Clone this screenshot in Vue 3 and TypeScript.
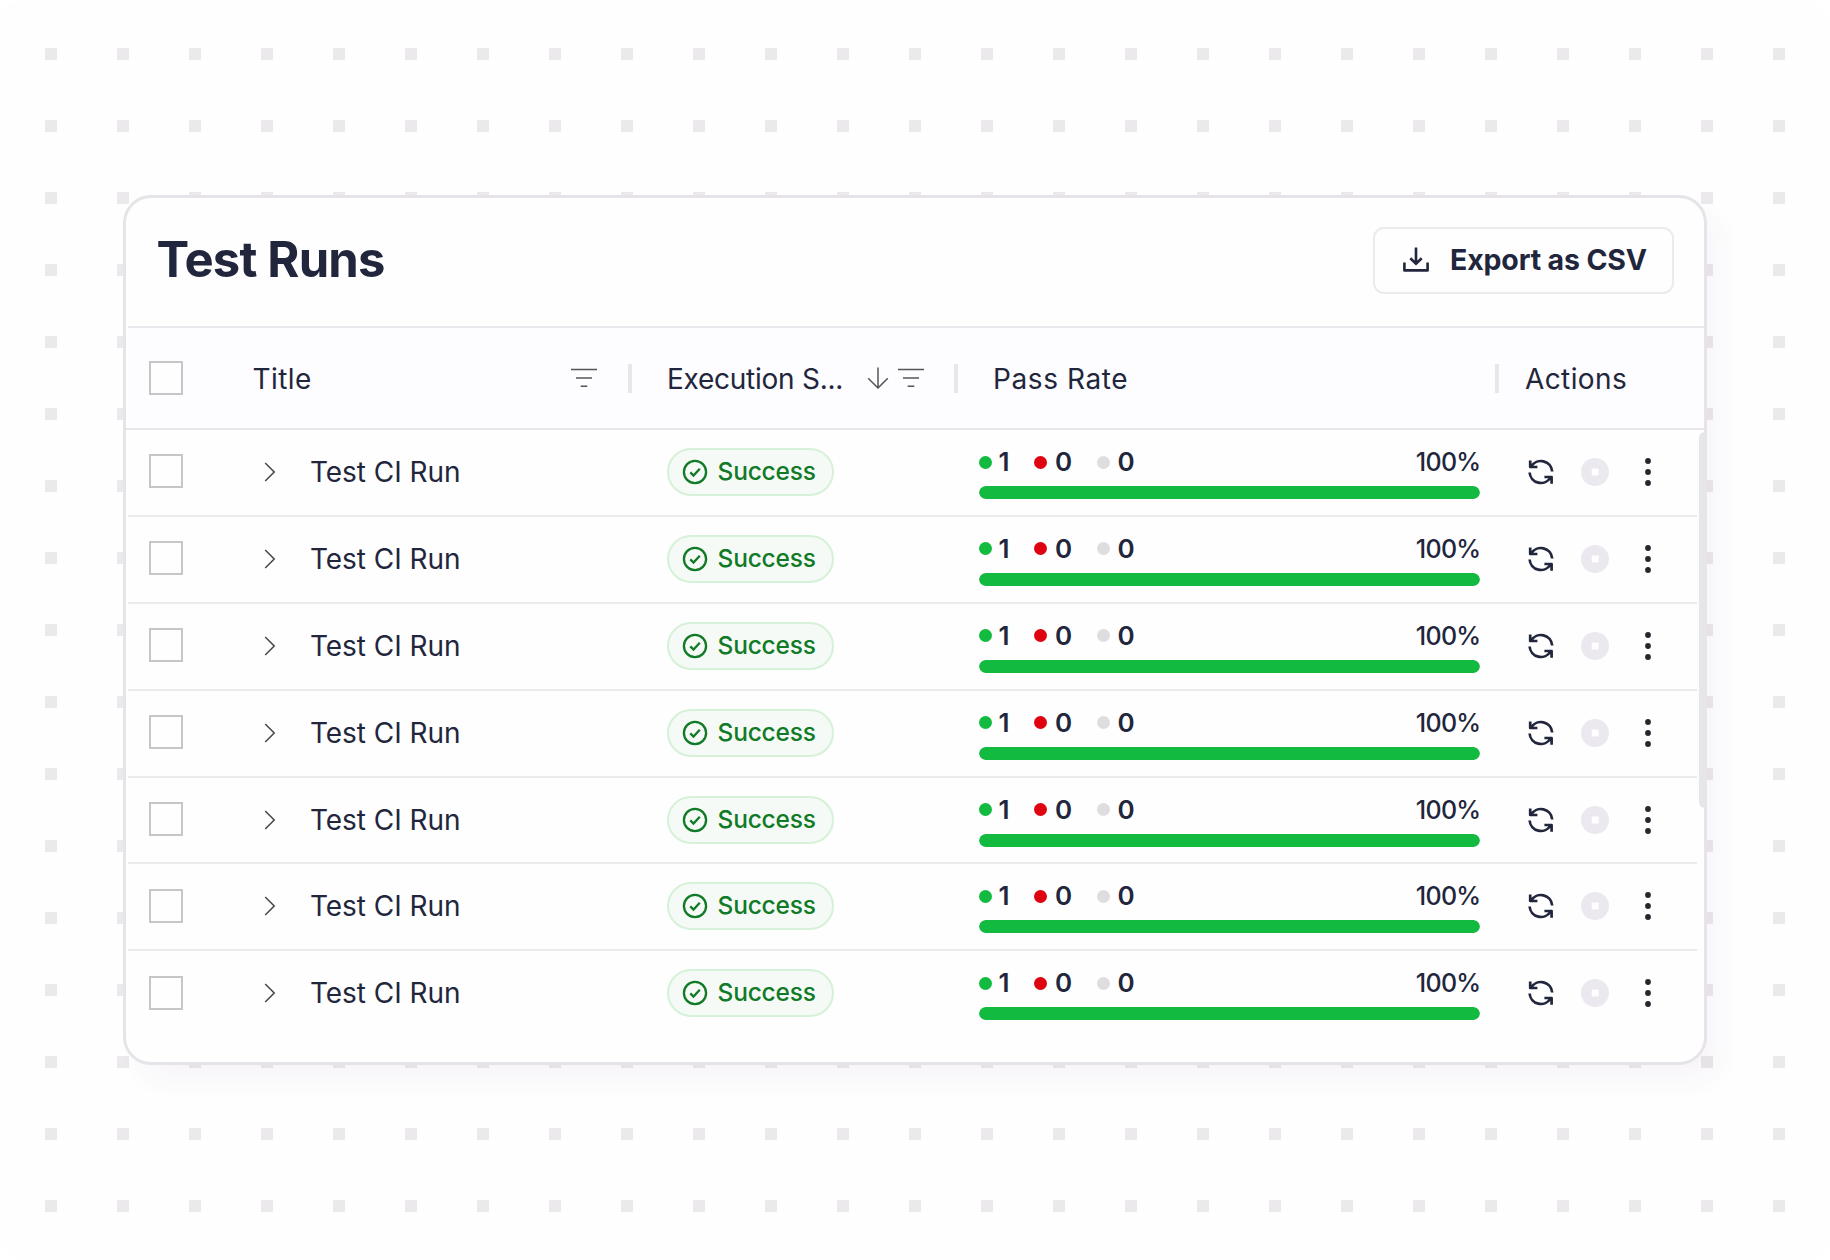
<script setup lang="ts">
interface Run {
  id: number
  title: string
  status: string
  passed: number
  failed: number
  skipped: number
}

const runs: Run[] = Array.from({ length: 7 }, (_, i) => ({
  id: i + 1,
  title: 'Test CI Run',
  status: 'Success',
  passed: 1,
  failed: 0,
  skipped: 0,
}))

function rate(run: Run): number {
  return Math.round((run.passed / (run.passed + run.failed + run.skipped)) * 100)
}
</script>

<template>
  <main class="page">
    <section class="card">
      <header class="toolbar">
        <h1>Test Runs</h1>
        <button class="export" type="button">
          <svg width="26" height="26" viewBox="0 0 26 26" fill="none" stroke="currentColor" stroke-width="2.6">
            <path d="M1.4 15.5V23.4H24.6V15.5" stroke-linejoin="round" />
            <path d="M13 .5V16.2M7.3 11.2L13 16.6L18.7 11.2" />
          </svg>
          <span>Export as CSV</span>
        </button>
      </header>

      <div class="grid head">
        <div class="cell check"><span class="box" /></div>
        <div class="cell title-head">
          <span class="label wide">Title</span>
          <svg class="filter" width="26" height="20" viewBox="0 0 26 20" stroke="currentColor" stroke-width="1.5">
            <path d="M0 1.5H26M5 10H21M9.7 18.3H16.3" />
          </svg>
          <i class="sep" />
        </div>
        <div class="cell exec-head">
          <span class="label">Execution S...</span>
          <svg class="arrow" width="22" height="22" viewBox="0 0 22 22" fill="none" stroke="currentColor" stroke-width="1.5">
            <path d="M11 .5V21M1.2 11.2L11 21L20.8 11.2" />
          </svg>
          <svg class="filter" width="26" height="20" viewBox="0 0 26 20" stroke="currentColor" stroke-width="1.5">
            <path d="M0 1.5H26M5 10H21M9.7 18.3H16.3" />
          </svg>
          <i class="sep" />
        </div>
        <div class="cell rate-head">
          <span class="label wider">Pass Rate</span>
          <i class="sep" />
        </div>
        <div class="cell actions-head"><span class="label wide">Actions</span></div>
      </div>

      <div class="body">
        <div v-for="run in runs" :key="run.id" class="grid row">
          <div class="cell check"><span class="box" /></div>
          <div class="cell title-cell">
            <svg width="12" height="20" viewBox="0 0 12 20" fill="none" stroke="#4a4a50" stroke-width="1.6">
              <path d="M1.2 1L10.2 10L1.2 19" />
            </svg>
            <span class="label">{{ run.title }}</span>
          </div>
          <div class="cell">
            <span class="badge">
              <svg width="26" height="26" viewBox="0 0 26 26" fill="none" stroke="currentColor" stroke-width="2.3">
                <circle cx="13" cy="13" r="11.1" />
                <path d="M8.3 13.4L11.5 16.6L17.8 9.8" />
              </svg>
              <span>{{ run.status }}</span>
            </span>
          </div>
          <div class="cell rate-cell">
            <div class="stats">
              <span class="stat passed"><i class="dot" />{{ run.passed }}</span>
              <span class="stat failed"><i class="dot" />{{ run.failed }}</span>
              <span class="stat skipped"><i class="dot" />{{ run.skipped }}</span>
              <span class="percent">{{ rate(run) }}%</span>
            </div>
            <div class="track"><div class="fill" :style="{ width: rate(run) + '%' }" /></div>
          </div>
          <div class="cell actions">
            <svg width="28" height="28" viewBox="0 0 28 28" fill="none" stroke="#22263c" stroke-width="2.7">
              <path d="M25.2 13.5A11.3 11.3 0 0 0 4.2 8.6M3.2 2.4V9H10.4" stroke-linejoin="round" />
              <path d="M2.6 14.5A11.3 11.3 0 0 0 23.6 19.4M24.6 25.8V19H17.4" stroke-linejoin="round" />
            </svg>
            <svg width="28" height="28" viewBox="0 0 28 28">
              <circle cx="14" cy="14" r="14" fill="#ebe9ef" />
              <rect x="10.7" y="10.5" width="7" height="7" rx="1" fill="#fefefe" />
            </svg>
            <svg class="kebab" width="8" height="30" viewBox="0 0 8 30" fill="#26262f">
              <circle cx="4" cy="4" r="2.9" />
              <circle cx="4" cy="15" r="2.9" />
              <circle cx="4" cy="26" r="2.9" />
            </svg>
          </div>
        </div>
      </div>
      <div class="scrollbar" />
    </section>
  </main>
</template>

<style>
body {
  background: #fff;
}
</style>

<style scoped>
* {
  box-sizing: border-box;
}

.page {
  height: 1260px;
  padding: 195px 123px;
  border-radius: 24px;
  color: #22263c;
  font-family: Inter, "Liberation Sans", sans-serif;
  background:
    conic-gradient(from 90deg at 60px 60px, #ebe9ec 0 90deg, #fefefe 0) 57px 60px / 72px 72px;
  overflow: hidden;
}

.card {
  position: relative;
  height: 870px;
  border: 3px solid #e6e4e8;
  border-radius: 28px;
  background: #fefefe;
  box-shadow: 15px 18px 24px rgba(110, 60, 130, 0.04);
}

.toolbar {
  display: flex;
  align-items: flex-start;
  justify-content: space-between;
  height: 130px;
  margin-left: 2px;
  padding: 29px 30px 0 28.5px;
  border-bottom: 2px solid #e9e8ec;
}

h1 {
  margin: 2px 0 0;
  font-size: 49px;
  font-weight: 650;
  line-height: 62px;
  letter-spacing: -0.85px;
}

.export {
  display: flex;
  align-items: center;
  width: 301px;
  height: 67px;
  padding: 0 0 1px 28px;
  border: 2px solid #ebeaee;
  border-radius: 11px;
  background: #fefefe;
  color: inherit;
  font: 650 28.5px/34px Inter, "Liberation Sans", sans-serif;
  letter-spacing: -0.15px;
}

.export span {
  margin-left: 21px;
  white-space: nowrap;
}

.grid {
  display: grid;
  grid-template-columns: 126px 415px 310px 501px 1fr;
}

.cell {
  display: flex;
  align-items: center;
  min-width: 0;
}

.head {
  height: 102px;
  padding-left: 2px;
  border-bottom: 2px solid #e8e6ea;
  background: linear-gradient(#fdfcfe, #fdfcfe) 2px 0 no-repeat;
}

.row {
  height: 86.9px;
  margin: 0 7px 0 2px;
  padding-bottom: 1px;
  border-bottom: 2px solid #ebeaed;
}

.row:last-child {
  padding-bottom: 3px;
  border-bottom: 0;
}

.check {
  padding-left: 21px;
}

.row .check {
  padding-bottom: 1px;
}

.box {
  width: 34px;
  height: 34px;
  border: 2px solid #c6c5c8;
  background: #fefefe;
}

.label {
  font-size: 28px;
  font-weight: 440;
  line-height: 34px;
  letter-spacing: -0.05px;
  white-space: nowrap;
}

.head .label {
  padding-top: 1px;
}

.wide {
  letter-spacing: 0.4px;
}

.wider {
  letter-spacing: 0.6px;
}

.filter,
.arrow {
  flex: none;
  color: #55555b;
}

.sep {
  width: 4px;
  height: 29px;
  background: #e8e6ea;
}

.title-head .filter {
  margin-left: auto;
}

.title-head .sep {
  margin: 0 37px 0 31px;
}

.title-head .label {
  margin-left: -1.5px;
}

.exec-head .arrow {
  margin-left: auto;
}

.exec-head .filter {
  margin-left: 9px;
}

.exec-head .sep {
  margin: 0 21px 0 30px;
}

.exec-head .label {
  margin-left: -2px;
  letter-spacing: -0.25px;
}

.rate-head .label {
  margin-left: 14px;
}

.rate-head .sep {
  margin-right: -18.5px;
  margin-left: auto;
}

.actions-head {
  padding-left: 45px;
}

.title-cell svg {
  margin-left: 10px;
}

.title-cell .label {
  margin-left: 34px;
}

.badge {
  display: flex;
  align-items: center;
  width: 167px;
  height: 48px;
  margin-left: -2px;
  padding-left: 13px;
  border: 2px solid #d5f1d8;
  border-radius: 24px;
  background: #f5faf7;
  color: #107a26;
  font-size: 24.5px;
  font-weight: 540;
  letter-spacing: -0.2px;
}

.badge span {
  margin: -2px 0 0 9.5px;
}

.rate-cell {
  flex-direction: column;
  align-items: stretch;
}

.stats {
  display: flex;
  align-items: center;
  height: 30px;
  margin-top: 17px;
  font-size: 25px;
  line-height: 30px;
}

.stat {
  display: flex;
  align-items: center;
  font-size: 26px;
  font-weight: 560;
}

.dot {
  width: 13px;
  height: 13px;
  border-radius: 50%;
}

.passed {
  width: 55px;
}

.passed .dot {
  margin-right: 6.5px;
  background: #12bb40;
}

.failed {
  width: 63px;
}

.failed .dot {
  margin-right: 8px;
  background: #df0310;
}

.skipped .dot {
  margin-right: 7.5px;
  background: #dfdde0;
}

.percent {
  margin-left: auto;
  margin-right: -0.5px;
  font-weight: 460;
  letter-spacing: -0.7px;
}

.track {
  height: 13px;
  margin-top: 9px;
  border-radius: 7px;
  background: #ebe9ef;
  overflow: hidden;
}

.fill {
  height: 100%;
  border-radius: 7px;
  background: #12bb40;
}

.actions {
  padding-left: 46.5px;
  gap: 26px;
}

.kebab {
  margin-left: 9.5px;
}

/* Thumb floats over the right edge of the card. */
.scrollbar {
  position: absolute;
  top: 234px;
  right: -3px;
  width: 8px;
  height: 376px;
  border-radius: 6px 0 0 6px;
  background: #e6e5e9;
}
</style>
